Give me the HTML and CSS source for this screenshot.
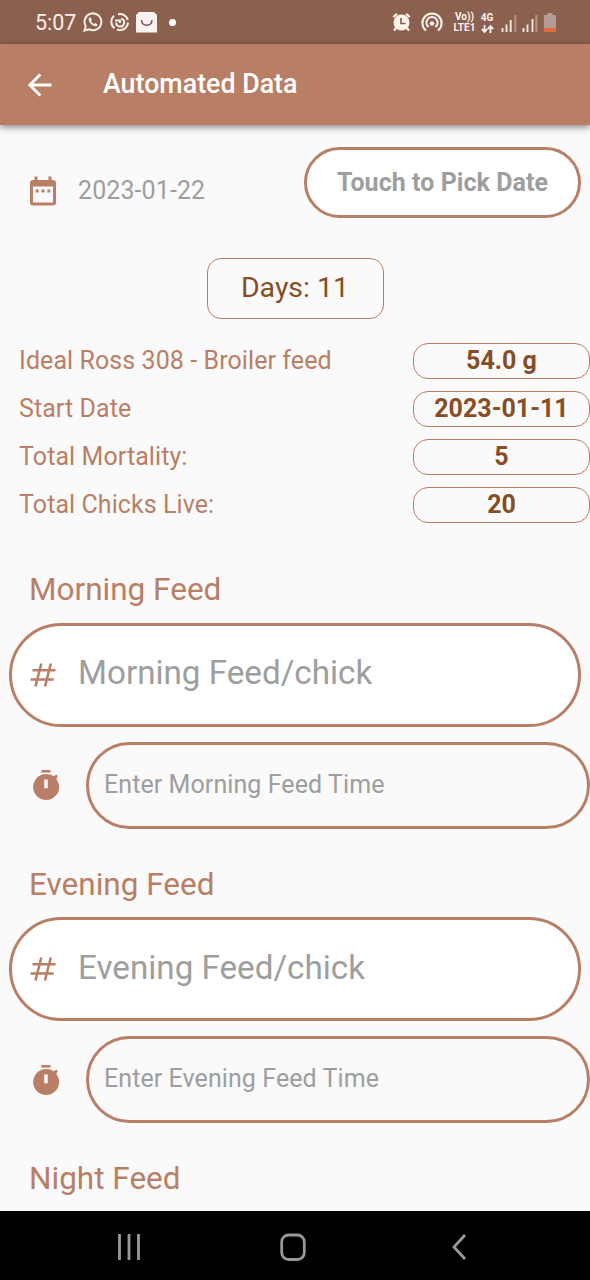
FILE: index.html
```html
<!DOCTYPE html>
<html lang="en">
<head>
<meta charset="utf-8">
<title>Automated Data</title>
<link rel="stylesheet" href="styles.css">
</head>
<body>
<svg class="defs" width="0" height="0" aria-hidden="true">
  <symbol id="stopwatch" viewBox="0 0 28 32">
    <path fill="currentColor" d="M9.300 1h9.200v2.600H9.300z"/>
    <path fill="currentColor" fill-rule="evenodd" d="M14 5c3.100 0 5.600.9 7.700 2.300L24.400 5.600l1.400 1.400-1.500 2.900A13 13 0 1 1 14 5zM12.200 10.500v8.700h3.500v-8.700z"/>
  </symbol>
  <symbol id="hash" viewBox="0 0 26 26">
    <path fill="none" stroke="currentColor" stroke-width="2.500" d="M11.300 1.500 5.500 24.500M20.800 1.500 15 24.500M2.500 8.300H25.500M.5 17.400H23.700"/>
  </symbol>
</svg>
<div class="phone">
  <header class="status">
    <span class="clock">5:07</span>
    <svg class="st-whatsapp" viewBox="0 0 20 20" width="20" height="20"><path d="M1.500 18.500 2.700 14A8.400 8.400 0 1 1 6 17.200z" fill="none" stroke="#fbeee6" stroke-width="2"/><path d="M7.200 5.200 5.700 6.500c-.5 4 4 8.300 7.800 7.700l1.200-1.700-2.300-1.500-1.200 1C9.600 11.300 8.600 10 8 8.700l1-1z" fill="#fbeee6"/></svg>
    <svg class="st-sync" viewBox="0 0 20 20" width="20" height="20" fill="none" stroke="#fbeee6" stroke-width="2"><path d="M4 3.800A8 8 0 0 0 4.500 16.200M7 17.500A8 8 0 0 0 18 10.500M17.800 8A8 8 0 0 0 8 2.200"/><path d="M5 8.500h4.500M6.200 10.500a4 4 0 1 0 5-3.800M10 7.500V11"/></svg>
    <svg class="st-bag" viewBox="0 0 21 22" width="21" height="22"><path d="M3 1h15l3 3v17.500H0V4z" fill="#faf3ef"/><path d="M5.500 9c.5 7 10 7 10.500 0" fill="none" stroke="#795548" stroke-width="1.500"/></svg>
    <i class="dot"></i>
    <svg class="st-alarm" viewBox="0 0 19 20" width="19" height="20"><path d="M1.200 5 5 1.800M17.800 5 14 1.800M4 16l-2 2.700M15 16l2 2.700" stroke="#fff3ec" stroke-width="2.200"/><circle cx="9.500" cy="10.500" r="8" fill="#fff3ec"/><path d="M9 6v5.500h4.500" fill="none" stroke="#8c604f" stroke-width="1.700"/></svg>
    <svg class="st-cast" viewBox="0 0 22 20" width="22" height="20" fill="none" stroke="#fff3ec" stroke-width="2"><path d="M5 18.500A9.600 9.600 0 1 1 17 18.500M7.500 15a5.600 5.600 0 1 1 7 0"/><circle cx="11" cy="11.500" r="2.300" fill="#fff3ec" stroke="none"/></svg>
    <span class="tiny volte"><span>Vo))</span><span>LTE1</span></span>
    <span class="tiny lte"><span>4G</span><svg viewBox="0 0 13 8" width="13" height="8" fill="none" stroke="#fff3ec" stroke-width="1.800"><path d="M3.500 0v6.500M.8 4l2.700 3 2.700-3M9.500 8V1.500M6.800 4l2.700-3 2.700 3"/></svg></span>
    <svg class="st-sig1" viewBox="0 0 16 18" width="16" height="18"><path d="M1.500 14v4M5.500 10.500V18M9.700 6v12" stroke="#f5e6df" stroke-width="1.900"/><path d="M14.300 1v17" stroke="#b79586" stroke-width="2"/></svg>
    <svg class="st-sig2" viewBox="0 0 16 18" width="16" height="18"><path d="M1.500 14v4M5.500 10.500V18M10.500 5v13" stroke="#f5e6df" stroke-width="1.900"/><path d="M14.300 1v17" stroke="#b79586" stroke-width="2"/></svg>
    <svg class="st-battery" viewBox="0 0 12 19" width="12" height="19"><path d="M3.500 0h5v2H12v16.500H0V2h3.500z" fill="#b39c93"/><path d="M0 15h12v3.500H0z" fill="#f0673d"/></svg>
  </header>

  <div class="appbar">
    <svg class="back" viewBox="0 0 24 24" width="24" height="24"><path d="M23.500 12H2.500M12.300 1.500 1.800 12l10.500 10.500" fill="none" stroke="#fff" stroke-width="2.800"/></svg>
    <h1 class="title">Automated Data</h1>
  </div>

  <main class="content">
    <div class="date-row">
      <svg class="calendar" viewBox="0 0 26 30" width="26" height="30"><path fill="currentColor" fill-rule="evenodd" d="M4.500.5h3V4h11V.5h3V4H23c2 0 3 1 3 3v19.500c0 2-1 3-3 3H3c-2 0-3-1-3-3V7c0-2 1-3 3-3h1.500zM3 10.500v16h20v-16z"/><path fill="currentColor" d="M5.700 13.500h3v3h-3zM11.500 13.500h3v3h-3zM17.300 13.500h3v3h-3z"/></svg>
      <span class="date-value">2023-01-22</span>
      <button class="pick"><span>Touch to Pick Date</span></button>
    </div>

    <div class="days"><span>Days: 11</span></div>

    <div class="stats">
      <div class="stat"><span class="label">Ideal Ross 308 - Broiler feed</span><b class="value">54.0 g</b></div>
      <div class="stat"><span class="label">Start Date</span><b class="value">2023-01-11</b></div>
      <div class="stat"><span class="label">Total Mortality:</span><b class="value">5</b></div>
      <div class="stat"><span class="label">Total Chicks Live:</span><b class="value">20</b></div>
    </div>

    <section class="feed">
      <h2 class="feed-title">Morning Feed</h2>
      <div class="amount"><svg class="hash" width="26" height="26"><use href="#hash"/></svg><span>Morning Feed/chick</span></div>
      <div class="time-row"><svg class="watch" width="28" height="32"><use href="#stopwatch"/></svg><div class="time"><span>Enter Morning Feed Time</span></div></div>
    </section>
    <section class="feed">
      <h2 class="feed-title">Evening Feed</h2>
      <div class="amount"><svg class="hash" width="26" height="26"><use href="#hash"/></svg><span>Evening Feed/chick</span></div>
      <div class="time-row"><svg class="watch" width="28" height="32"><use href="#stopwatch"/></svg><div class="time"><span>Enter Evening Feed Time</span></div></div>
    </section>
    <section class="feed">
      <h2 class="feed-title">Night Feed</h2>
    </section>
  </main>

  <nav class="navbar">
    <svg class="nav-recents" viewBox="0 0 24 28" width="24" height="28"><path d="M2.500 1v26M12 1v26M21.500 1v26" stroke="#989898" stroke-width="2.800"/></svg>
    <svg class="nav-home" viewBox="0 0 26 28" width="26" height="28"><rect x="1.700" y="2" width="22.600" height="24.500" rx="7" fill="none" stroke="#989898" stroke-width="2.800"/></svg>
    <svg class="nav-back" viewBox="0 0 16 28" width="16" height="28"><path d="M14 2 3 14l11 12" fill="none" stroke="#989898" stroke-width="2.800"/></svg>
  </nav>
</div>
</body>
</html>
```
FILE: styles.css
```css
* { box-sizing: border-box; }
body { margin: 0; font-family: Roboto, sans-serif; }
svg { flex: none; display: block; }
.defs { position: absolute; }
.phone {
  width: 590px; height: 1280px; overflow: hidden;
  display: flex; flex-direction: column;
  background: #fafafa; color: #b97f66;
}

.status { height: 44px; flex: none; display: flex; align-items: center; background: #8c604f; color: #fff3ec; padding-left: 35px; }
.clock { font-size: 21.5px; line-height: 44px; width: 48px; color: #fbeee6; padding-top: 2px; }
.st-sync { margin-left: 7px; }
.st-bag { margin-left: 6px; }
.dot { width: 7px; height: 7px; border-radius: 50%; background: #fff; margin-left: 12px; }
.st-alarm { margin-left: 216px; }
.st-cast { margin-left: 10px; }
.tiny { display: flex; flex-direction: column; align-items: center; font-size: 10px; line-height: 11px; font-weight: 700; white-space: nowrap; }
.volte { width: 23px; margin-left: 10px; }
.lte { width: 14px; margin-left: 4px; }
.lte svg { margin-top: 2px; }
.st-sig1 { margin: 2px 0 0 7px; }
.st-sig2 { margin: 2px 0 0 5px; }
.st-battery { margin-left: 6px; }

.appbar {
  height: 81px; flex: none; display: flex; align-items: center; padding-left: 28px;
  background: #b97f66; color: #fff; box-shadow: 0 2px 7px rgba(0,0,0,.5); z-index: 1;
}
.title { margin: 0 0 2px 51px; font-size: 26.8px; font-weight: 500; line-height: 32px; white-space: nowrap; }

.content { flex: 1; min-height: 0; overflow: hidden; }
.date-row { display: flex; padding: 22px 9px 0 30px; height: 133px; }
.calendar { margin-top: 29px; }
.date-value { margin: 28px 0 0 22px; font-size: 25px; line-height: 32px; letter-spacing: .1px; color: #9e9e9e; }
.pick {
  margin-left: auto; width: 277px; height: 71px; border: 3px solid #b97f66; border-radius: 36px;
  background: #fff; color: #9e9e9e; font: 700 25px/30px Roboto, sans-serif; letter-spacing: .05px; padding: 0; white-space: nowrap;
}
.days {
  width: 177px; height: 61px; margin-left: 206.5px; border: 1.5px solid #b97f66; border-radius: 14px;
  font-size: 28.5px; line-height: 58px; text-align: center; color: #864d26;
}
.stats { padding: 23.500px 0 0 19px; display: grid; gap: 12px; }
.stat { display: flex; justify-content: space-between; height: 36px; }
.label { font-size: 25px; line-height: 36px; letter-spacing: .08px; }
.value {
  width: 177px; border: 1.5px solid #b97f66; border-radius: 15px; text-align: center;
  font-size: 25px; line-height: 34px; color: #864d26;
}

.feed { height: 294.700px; }
.stats + .feed { margin-top: 47.500px; }
.feed-title { margin: 0 0 0 29px; font-size: 31.500px; font-weight: 400; line-height: 39px; height: 52.500px; }
.amount {
  width: 572px; height: 104px; margin-left: 9px; border: 3px solid #b97f66; border-radius: 52px;
  background: #fff; display: flex; align-items: center; padding-left: 18px;
}
.amount span { margin: 0 0 3px 22px; color: #9e9e9e; font-size: 33.200px; line-height: 40px; }
.time-row { display: flex; align-items: center; margin-top: 15px; padding-left: 32px; }
.time {
  width: 504px; height: 87px; margin-left: 26px; border: 3px solid #b97f66; border-radius: 44px;
  padding-left: 15px; font-size: 25px; line-height: 80px; letter-spacing: .08px; color: #9e9e9e;
}

.navbar { height: 69px; flex: none; background: #000; display: flex; align-items: center; padding: 2px 0 0 117px; }
.nav-home { margin-left: 139px; }
.nav-back { margin-left: 145px; }
```
